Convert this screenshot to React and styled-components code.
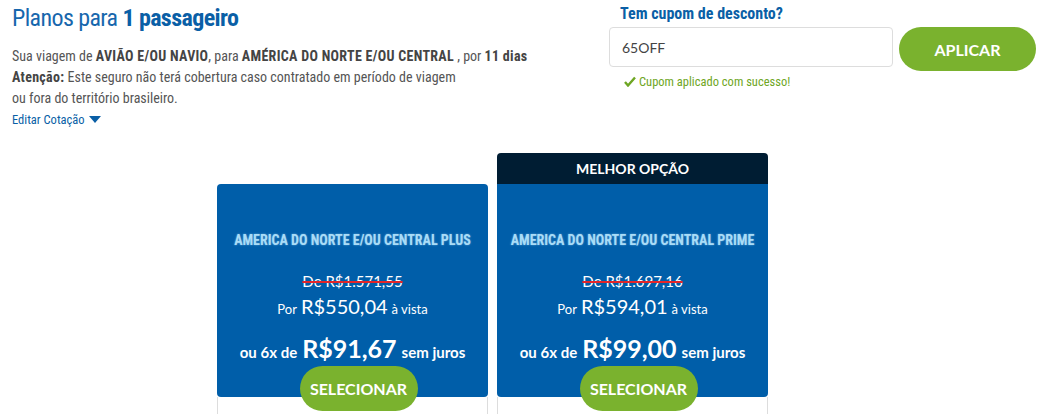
import React from 'react';
import styled, { createGlobalStyle } from 'styled-components';

const GlobalStyle = createGlobalStyle`
  body {
    margin: 0;
    background: #fff;
    font-family: 'Liberation Sans Narrow', 'Roboto Condensed', 'Liberation Sans', sans-serif;
  }
`;

const Page = styled.div`
  width: 1042px;
  height: 414px;
  overflow: hidden;
`;

const Top = styled.div`
  display: flex;
  justify-content: space-between;
  padding: 0 6px 0 12px;
`;

const Intro = styled.div`
  width: 560px;
`;

const Title = styled.h1`
  margin: 2px 0 12px;
  font-size: 24px;
  line-height: 32px;
  font-weight: 400;
  color: #1767ad;
  letter-spacing: -0.6px;
  b {
    font-weight: 700;
    color: #0a5fa6;
  }
`;

const Info = styled.p`
  margin: 0;
  font-size: 14px;
  line-height: 21px;
  color: #555;
  b {
    color: #444;
    letter-spacing: 0.3px;
  }
`;

const EditLink = styled.a`
  display: inline-flex;
  align-items: center;
  gap: 4px;
  margin-top: 2px;
  font-size: 12.5px;
  color: #0a5fa6;
  text-decoration: none;
  cursor: pointer;
`;

const Coupon = styled.div`
  width: 427px;
  padding-top: 4px;
`;

const CouponLabel = styled.div`
  margin-left: 11px;
  font-size: 16px;
  font-weight: 700;
  line-height: 20px;
  color: #0a5fa6;
`;

const CouponRow = styled.div`
  display: flex;
  gap: 6px;
  margin-top: 3px;
`;

const CouponInput = styled.input`
  width: 284px;
  height: 40px;
  box-sizing: border-box;
  border: 1px solid #ddd;
  border-radius: 4px;
  padding: 0 12px;
  font-size: 14px;
  font-family: 'Lato', sans-serif;
  color: #444;
  outline: none;
`;

const GreenButton = styled.button`
  flex-shrink: 0;
  border: 0;
  border-radius: 23px;
  background: #7ab22e;
  color: #fff;
  font-family: 'Lato', sans-serif;
  font-weight: 700;
  font-size: 16px;
  cursor: pointer;
  width: ${p => p.$w}px;
  height: ${p => p.$h}px;
`;

const Success = styled.div`
  display: flex;
  align-items: center;
  gap: 3px;
  margin: 3px 0 0 15px;
  font-size: 12.5px;
  color: #6ea624;
`;

const Plans = styled.div`
  display: flex;
  gap: 9px;
  align-items: flex-end;
  margin: 25px 0 0 217px;
`;

const Card = styled.div`
  width: 271px;
  display: flex;
  flex-direction: column;
`;

const Ribbon = styled.div`
  height: 31px;
  line-height: 31px;
  background: #001d33;
  border-radius: 4px 4px 0 0;
  color: #fff;
  text-align: center;
  font-family: 'Lato', sans-serif;
  font-weight: 700;
  font-size: 14px;
`;

const CardBody = styled.div`
  height: 213px;
  box-sizing: border-box;
  background: #005ea9;
  border-radius: ${p => (p.$ribbon ? '0 0 4px 4px' : '4px')};
  display: flex;
  flex-direction: column;
  align-items: center;
  color: #fff;
  padding-top: 48px;
  & > * {
    flex-shrink: 0;
  }
`;

const PlanName = styled.div`
  font-size: 14px;
  font-weight: 700;
  color: #a9dcf7;
  text-shadow: 0 0 2px rgba(169, 220, 247, 0.6);
  line-height: 16px;
`;

const OldPrice = styled.div`
  margin-top: 24px;
  font-family: 'Lato', sans-serif;
  font-size: 15px;
  line-height: 18px;
  color: #fff;
  text-decoration: line-through;
  text-decoration-color: #e2262a;
  text-decoration-thickness: 1.5px;
`;

const CashPrice = styled.div`
  margin-top: 4px;
  height: 24px;
  display: flex;
  align-items: baseline;
  gap: 4px;
  font-family: 'Lato', sans-serif;
  font-size: 13px;
  line-height: 24px;
  span {
    font-size: 20px;
  }
`;

const Installment = styled.div`
  margin-top: 14px;
  height: 32px;
  display: flex;
  align-items: baseline;
  gap: 5px;
  font-family: 'Lato', sans-serif;
  font-weight: 700;
  font-size: 15px;
  line-height: 32px;
  span {
    font-size: 25px;
  }
`;

const SelectButton = styled(GreenButton)`
  margin: 2px 0 -16px 12px;
  position: relative;
  z-index: 1;
`;

const CardFoot = styled.div`
  height: 40px;
  border-left: 1px solid #ddd;
  border-right: 1px solid #ddd;
`;

const Triangle = () => (
  <svg width="12" height="8" viewBox="0 0 12 8">
    <path d="M0 0h12L6 7z" fill="#0a5fa6" />
  </svg>
);

const Check = () => (
  <svg width="12" height="11" viewBox="0 0 12 11">
    <path d="M1 6l3 3.5L11 1.5" fill="none" stroke="#6ea624" strokeWidth="2.4" />
  </svg>
);

const plans = [
  { name: 'AMERICA DO NORTE E/OU CENTRAL PLUS', old: '1.571,55', cash: '550,04', inst: '91,67' },
  { name: 'AMERICA DO NORTE E/OU CENTRAL PRIME', old: '1.697,16', cash: '594,01', inst: '99,00', best: true },
];

export default function App() {
  return (
    <Page>
      <GlobalStyle />
      <Top>
        <Intro>
          <Title>Planos para <b>1 passageiro</b></Title>
          <Info>
            Sua viagem de <b>AVIÃO E/OU NAVIO</b>, para <b>AMÉRICA DO NORTE E/OU CENTRAL</b> , por <b>11 dias</b>
          </Info>
          <Info>
            <b>Atenção:</b> Este seguro não terá cobertura caso contratado em período de viagem
            <br />
            ou fora do território brasileiro.
          </Info>
          <EditLink>Editar Cotação <Triangle /></EditLink>
        </Intro>
        <Coupon>
          <CouponLabel>Tem cupom de desconto?</CouponLabel>
          <CouponRow>
            <CouponInput defaultValue="65OFF" />
            <GreenButton $w={137} $h={44}>APLICAR</GreenButton>
          </CouponRow>
          <Success><Check />Cupom aplicado com sucesso!</Success>
        </Coupon>
      </Top>
      <Plans>
        {plans.map(p => (
          <Card key={p.name}>
            {p.best && <Ribbon>MELHOR OPÇÃO</Ribbon>}
            <CardBody $ribbon={p.best}>
              <PlanName>{p.name}</PlanName>
              <OldPrice>De R${p.old}</OldPrice>
              <CashPrice>Por <span>R${p.cash}</span> à vista</CashPrice>
              <Installment>ou 6x de <span>R${p.inst}</span> sem juros</Installment>
              <SelectButton $w={118} $h={45}>SELECIONAR</SelectButton>
            </CardBody>
            <CardFoot />
          </Card>
        ))}
      </Plans>
    </Page>
  );
}
